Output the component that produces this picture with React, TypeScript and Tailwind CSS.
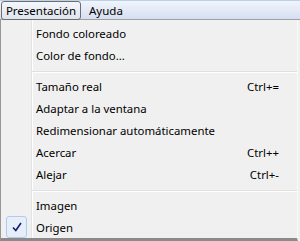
import React from "react";

const font = { fontFamily: '"Noto Sans", "Open Sans", sans-serif' };

function Item({ label, shortcut, checked }: { label: string; shortcut?: string; checked?: boolean }) {
  return (
    <div className="flex h-[22px] items-center">
      <div className="flex w-[30px] shrink-0 items-center justify-center">
        {checked ? (
          <div className="ml-[1px] flex h-[22px] w-[21px] items-center justify-center rounded-[3px] border border-[#aeccf0] bg-[#e8eef8]">
            <svg width="10" height="10" viewBox="0 0 10 10">
              <path d="M1 5.5 L3.8 8.5 L9 1" fill="none" stroke="#0c1e7a" strokeWidth="1.6" />
            </svg>
          </div>
        ) : null}
      </div>
      <div className="ml-[5px] flex-1 pt-[2px] text-[11.4px] text-black">{label}</div>
      {shortcut ? <div className="mr-[18px] pt-[2px] text-[11.4px] text-black">{shortcut}</div> : null}
    </div>
  );
}

function Sep() {
  return (
    <div className="flex h-[9px] flex-col">
      <div className="flex pt-[5px]">
        <div className="w-[31px] shrink-0" />
        <div className="flex-1">
          <div className="h-px bg-[#e0e0e0]" />
          <div className="h-px bg-white" />
        </div>
      </div>
    </div>
  );
}

export default function App() {
  return (
    <div className="relative h-[241px] w-[300px] overflow-hidden bg-[#f0f0f0]" style={font}>
      <div className="flex h-[20px] items-stretch border-t border-[#b9d1ea] bg-gradient-to-b from-[#f1f5fb] to-[#d6dff2] border-b border-b-[#a0a0a0]">
        <div className="ml-[1px] flex h-[19px] w-[80px] items-center justify-center rounded-[3px] border border-[#6e6e6e] bg-gradient-to-b from-[#f4f6fa] to-[#dfe4ee] pt-[1px] text-[11.5px] text-black">
          Presentación
        </div>
        <div className="ml-[2px] flex items-center px-[6px] pt-[1px] text-[11.5px] text-black">Ayuda</div>
      </div>
      <div className="relative h-[221px] w-[298px] border-b-[3px] border-l border-r border-b-[#8a8a8a] border-l-[#979797] border-r-[#fafafa] bg-[#f0f0f0] pt-[2px]">
        <div className="absolute bottom-0 left-[30px] top-0 w-[2px] border-l border-[#e2e3e3] bg-white" />
        <div className="relative">
          <Item label="Fondo coloreado" />
          <Item label="Color de fondo..." />
          <Sep />
          <Item label="Tamaño real" shortcut="Ctrl+=" />
          <Item label="Adaptar a la ventana" />
          <Item label="Redimensionar automáticamente" />
          <Item label="Acercar" shortcut="Ctrl++" />
          <Item label="Alejar" shortcut="Ctrl+-" />
          <Sep />
          <Item label="Imagen" />
          <Item label="Origen" checked />
        </div>
      </div>
    </div>
  );
}
